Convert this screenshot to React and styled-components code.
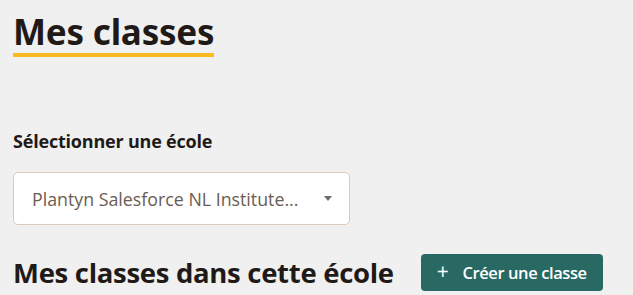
import styled, { createGlobalStyle } from 'styled-components';

const GlobalStyle = createGlobalStyle`
  html, body {
    margin: 0;
    padding: 0;
    background: #eff0ef;
  }
  body {
    font-family: 'Open Sans', 'Noto Sans', sans-serif;
    color: #1f1a17;
  }
`;

const Page = styled.div`
  padding: 12px 13px 0;
  display: flex;
  flex-direction: column;
`;

const Title = styled.h1`
  align-self: flex-start;
  margin: 0;
  font-family: 'Noto Sans', 'Open Sans', sans-serif;
  font-size: 35px;
  font-weight: 700;
  line-height: 40px;
  letter-spacing: -0.2px;
  color: #1f1a17;
  padding-bottom: 1px;
  border-bottom: 4px solid #fbbb1c;
`;

const Label = styled.label`
  margin-top: 72px;
  font-size: 18px;
  font-weight: 700;
  line-height: 24px;
  letter-spacing: -0.2px;
  color: #1f1a17;
`;

const Select = styled.div`
  margin-top: 19px;
  width: 337px;
  height: 53px;
  box-sizing: border-box;
  background: #fff;
  border: 1px solid #dccbbd;
  border-radius: 5px;
  display: flex;
  align-items: center;
  justify-content: space-between;
  padding: 0 17px 0 18px;
  font-size: 17.8px;
  color: #6b5d52;
`;

const Caret = styled.span`
  width: 0;
  height: 0;
  border-left: 4px solid transparent;
  border-right: 4px solid transparent;
  border-top: 5px solid #6e6e6e;
`;

const Row = styled.div`
  margin-top: 29px;
  display: flex;
  align-items: center;
  gap: 27px;
`;

const Subtitle = styled.h2`
  margin: 0;
  font-size: 27.5px;
  font-weight: 700;
  line-height: 36px;
  letter-spacing: -0.3px;
  color: #1f1a17;
`;

const Button = styled.button`
  height: 37px;
  width: 182px;
  border: none;
  border-radius: 4px;
  background: #286963;
  color: #fff;
  font-family: 'Open Sans', 'Noto Sans', sans-serif;
  font-size: 16.5px;
  font-weight: 600;
  letter-spacing: -0.4px;
  display: flex;
  align-items: center;
  justify-content: center;
  gap: 14px;
`;

const Plus = styled.span`
  font-size: 21px;
  font-weight: 400;
  line-height: 1;
  margin-top: -2px;
`;

export default function App() {
  return (
    <>
      <GlobalStyle />
      <Page>
        <Title>Mes classes</Title>
        <Label>Sélectionner une école</Label>
        <Select>
          <span>Plantyn Salesforce NL Institute...</span>
          <Caret />
        </Select>
        <Row>
          <Subtitle>Mes classes dans cette école</Subtitle>
          <Button>
            <Plus>+</Plus>
            Créer une classe
          </Button>
        </Row>
      </Page>
    </>
  );
}
